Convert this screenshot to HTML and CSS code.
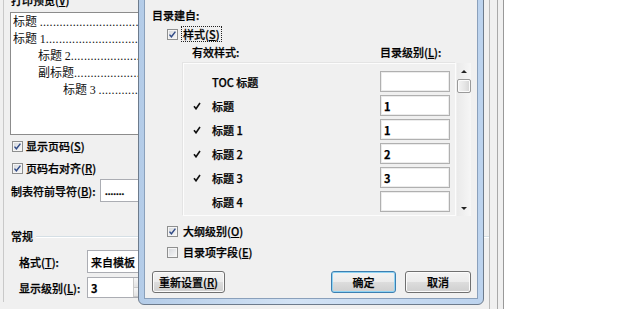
FILE: index.html
```html
<!DOCTYPE html>
<html lang="zh-CN">
<head>
  <meta charset="UTF-8" />
  <title>目录选项</title>
  <link rel="stylesheet" href="styles.css">
</head>
<body>
  <div class="screen">
    <div class="back">
      <div class="back-inner">
        <div class="caption">打印预览(<u>V</u>)</div>

        <div class="preview">
          <div class="toc-line">标题 <span class="dots">.............................................</span></div>
          <div class="toc-line">标题 <span class="num">1</span><span class="dots">.............................................</span></div>
          <div class="toc-line l2">标题 <span class="num">2</span><span class="dots">.............................................</span></div>
          <div class="toc-line l2">副标题<span class="dots">.............................................</span></div>
          <div class="toc-line l3">标题 <span class="num">3</span> <span class="dots">.............................................</span></div>
        </div>

        <div class="check check-first">
          <span class="cb"><svg width="9" height="9" viewBox="0 0 9 9"><path d="M1.5 4.6 L3.4 6.8 L7.4 1.6" fill="none" stroke="#2f4a86" stroke-width="1.4"/></svg></span>
          <span>显示页码(<u>S</u>)</span>
        </div>
        <div class="check check-next">
          <span class="cb"><svg width="9" height="9" viewBox="0 0 9 9"><path d="M1.5 4.6 L3.4 6.8 L7.4 1.6" fill="none" stroke="#2f4a86" stroke-width="1.4"/></svg></span>
          <span>页码右对齐(<u>R</u>)</span>
        </div>

        <div class="field field-leader">
          <span class="lbl lbl-wide">制表符前导符(<u>B</u>):</span>
          <div class="box box-combo"><span class="leader-dots">.......</span></div>
        </div>

        <div class="group">
          <span>常规</span>
          <span class="rule"></span>
        </div>

        <div class="field field-format">
          <span class="lbl">格式(<u>T</u>):</span>
          <div class="box box-combo">来自模板</div>
        </div>
        <div class="field field-level">
          <span class="lbl">显示级别(<u>L</u>):</span>
          <div class="box box-spin">
            <b>3</b>
            <span class="spinner"><i></i><i></i></span>
          </div>
        </div>
      </div>
    </div>
    <div class="edge"></div>
    <div class="white"></div>

    <div class="dialog">
      <div class="dialog-body">
        <div class="d-title">目录建自:</div>

        <div class="d-style">
          <span class="cb"><svg width="9" height="9" viewBox="0 0 9 9"><path d="M1.5 4.6 L3.4 6.8 L7.4 1.6" fill="none" stroke="#2f4a86" stroke-width="1.4"/></svg></span>
          <span class="focus">样式(<u>S</u>)</span>
        </div>

        <div class="d-head">
          <span class="d-head-name">有效样式:</span>
          <span>目录级别(<u>L</u>):</span>
        </div>

        <div class="d-list-wrap">
          <div class="d-list">
            <div class="d-row">
              <span class="tick"></span>
              <span class="name">TOC 标题</span>
              <span class="level"></span>
            </div>
            <div class="d-row">
              <span class="tick"><svg width="8" height="8" viewBox="0 0 8 8"><path d="M1 4.3 L3 6.8 L7 1" fill="none" stroke="#111" stroke-width="1.6"/></svg></span>
              <span class="name">标题</span>
              <span class="level">1</span>
            </div>
            <div class="d-row">
              <span class="tick"><svg width="8" height="8" viewBox="0 0 8 8"><path d="M1 4.3 L3 6.8 L7 1" fill="none" stroke="#111" stroke-width="1.6"/></svg></span>
              <span class="name">标题 1</span>
              <span class="level">1</span>
            </div>
            <div class="d-row">
              <span class="tick"><svg width="8" height="8" viewBox="0 0 8 8"><path d="M1 4.3 L3 6.8 L7 1" fill="none" stroke="#111" stroke-width="1.6"/></svg></span>
              <span class="name">标题 2</span>
              <span class="level">2</span>
            </div>
            <div class="d-row">
              <span class="tick"><svg width="8" height="8" viewBox="0 0 8 8"><path d="M1 4.3 L3 6.8 L7 1" fill="none" stroke="#111" stroke-width="1.6"/></svg></span>
              <span class="name">标题 3</span>
              <span class="level">3</span>
            </div>
            <div class="d-row">
              <span class="tick"></span>
              <span class="name">标题 4</span>
              <span class="level"></span>
            </div>
          </div>
          <div class="d-scroll">
            <span class="arrow"><i class="up"></i></span>
            <span class="thumb"></span>
            <span class="track"></span>
            <span class="arrow"><i class="down"></i></span>
          </div>
        </div>

        <div class="d-check d-check-first">
          <span class="cb"><svg width="9" height="9" viewBox="0 0 9 9"><path d="M1.5 4.6 L3.4 6.8 L7.4 1.6" fill="none" stroke="#2f4a86" stroke-width="1.4"/></svg></span>
          <span>大纲级别(<u>O</u>)</span>
        </div>
        <div class="d-check d-check-next">
          <span class="cb"></span>
          <span>目录项字段(<u>E</u>)</span>
        </div>

        <div class="d-buttons">
          <button class="btn btn-reset">重新设置(<u>R</u>)</button>
          <span class="spacer"></span>
          <button class="btn btn-ok">确定</button>
          <button class="btn btn-cancel">取消</button>
        </div>
      </div>
    </div>
  </div>
</body>
</html>
```

FILE: styles.css
```css
* {
  box-sizing: border-box;
}

html, body {
  margin: 0;
  padding: 0;
}

body {
  width: 620px;
  height: 309px;
  overflow: hidden;
  background: #fff;
  font-family: "Noto Sans CJK SC", "Noto Sans", sans-serif;
  font-size: 11px;
  font-weight: 500;
  color: #000;
  -webkit-text-stroke: 0.25px #000;
}

u {
  text-decoration: underline;
  text-underline-offset: 1px;
}

.screen {
  position: relative;
  display: flex;
  height: 309px;
}

/* window behind the dialog */
.back {
  width: 489px;
  background: #f0f0f0;
  overflow: hidden;
}

.back-inner {
  margin-left: 3px;
  height: 100%;
  border-left: 1px solid #c9c9c9;
  padding-left: 6px;
}

.edge {
  width: 15px;
  background: #f0f0f0 linear-gradient(to right, transparent 7px, #a9a9a9 7px, #a9a9a9 8px, transparent 8px);
  border-left: 1px solid #b8b8b8;
  border-right: 1px solid #999;
}

.white {
  flex: 1;
  background: #fff;
}

.caption {
  margin-top: -7px;
  padding-left: 1px;
  line-height: 14px;
}

.preview {
  margin-top: 5px;
  width: 260px;
  height: 123px;
  background: #fff;
  border: 1px solid #8c8c8c;
  padding-left: 2px;
  font-size: 12px;
  font-weight: 400;
  line-height: 16px;
  color: #111;
  -webkit-text-stroke: 0;
  overflow: hidden;
}

.toc-line {
  white-space: nowrap;
  overflow: hidden;
}

.toc-line.l2 {
  padding-left: 25px;
}

.toc-line.l3 {
  padding-left: 50px;
}

.num,
.dots {
  font-family: "Liberation Serif", serif;
}

.dots {
  letter-spacing: 0.3px;
}

.check {
  display: flex;
  align-items: center;
  gap: 3px;
  height: 16px;
  padding-left: 2px;
}

.check-first {
  margin-top: 3px;
}

.check-next {
  margin-top: 6px;
}

.cb {
  display: inline-flex;
  align-items: center;
  justify-content: center;
  width: 11px;
  height: 11px;
  flex: none;
  border: 1px solid #8e8f8f;
  background: linear-gradient(135deg, #d3d6db, #f9f9f9);
  box-shadow: inset 0 0 0 1px #f5f5f5;
}

.cb svg {
  display: block;
}

.field {
  display: flex;
  align-items: center;
}

.field-leader {
  margin-top: 3px;
  padding-left: 1px;
}

.field-format {
  margin-top: 7px;
  padding-left: 9px;
}

.field-level {
  margin-top: 4px;
  padding-left: 9px;
}

.lbl {
  width: 68px;
  flex: none;
}

.lbl-wide {
  width: 89px;
}

.box {
  display: flex;
  align-items: center;
  background: #fff;
  border: 1px solid #abadb3;
  padding-left: 3px;
}

.box-combo {
  width: 200px;
  height: 23px;
}

.leader-dots {
  font-family: "Liberation Serif", serif;
  font-weight: 700;
  line-height: 10px;
  padding-left: 1px;
}

.box-spin {
  width: 64px;
  height: 21px;
}

.box-spin b {
  flex: 1;
}

.spinner {
  display: flex;
  flex-direction: column;
  width: 17px;
  height: 19px;
  border-left: 1px solid #c9c9c9;
}

.spinner i {
  flex: 1;
  background: linear-gradient(#f6f6f6, #e3e3e3);
  border-bottom: 1px solid #c9c9c9;
}

.group {
  display: flex;
  align-items: center;
  margin-top: 27px;
  padding-left: 1px;
  line-height: 14px;
}

.group .rule {
  flex: 1;
  height: 1px;
  margin-left: 3px;
  background: #d5dfe5;
  box-shadow: 0 1px 0 #fff;
}

/* foreground dialog */
.dialog {
  position: absolute;
  left: 138px;
  top: -7px;
  width: 346px;
  height: 312px;
  padding: 5px;
  border: 1px solid #6d7b8c;
  border-radius: 0 0 6px 6px;
  background: linear-gradient(to right, #b4cce8, #d3e3f5 45%, #bcd3ee);
}

.dialog-body {
  height: 100%;
  background: #f0f0f0;
  border: 1px solid #8aa0bb;
}

.d-title {
  margin: 8px 0 0 7px;
  line-height: 14px;
}

.d-style {
  display: flex;
  align-items: center;
  gap: 3px;
  height: 16px;
  margin: 4px 0 0 22px;
}

.focus {
  border: 1px dotted #222;
  padding: 0 1px;
  line-height: 14px;
}

.d-head {
  display: flex;
  margin: 3px 0 0 47px;
  line-height: 14px;
}

.d-head-name {
  width: 188px;
}

.d-list-wrap {
  display: flex;
  gap: 1px;
  height: 153px;
  margin: 4px 0 0 38px;
}

.d-list {
  width: 273px;
  padding-top: 7px;
  border: 1px solid #fcfcfc;
  box-shadow: -1px -1px 0 #e4e4e4;
  overflow: hidden;
}

.d-row {
  display: flex;
  align-items: center;
  height: 21px;
  padding: 0 5px 0 9px;
  margin-bottom: 3px;
  flex: none;
}

.tick {
  width: 19px;
  flex: none;
}

.tick svg {
  display: block;
}

.name {
  flex: 1;
}

.level {
  display: flex;
  align-items: center;
  width: 70px;
  height: 21px;
  padding-left: 3px;
  background: #fff;
  border: 1px solid #b0b0b0;
  box-shadow: inset 0 0 0 1px #ececec;
  font-weight: 700;
}

.d-scroll {
  display: flex;
  flex-direction: column;
  align-items: center;
  width: 14px;
  background: linear-gradient(to right, #eaeaea, #f6f6f6);
}

.arrow {
  display: flex;
  align-items: center;
  justify-content: center;
  height: 16px;
  width: 100%;
}

.arrow i {
  width: 0;
  height: 0;
  border-left: 3px solid transparent;
  border-right: 3px solid transparent;
}

.arrow .up {
  border-bottom: 3px solid #222;
}

.arrow .down {
  border-top: 3px solid #222;
}

.thumb {
  width: 14px;
  height: 14px;
  border: 1px solid #9a9a9a;
  border-radius: 2px;
  background: linear-gradient(to right, #f4f4f4, #e4e4e4 60%, #d4d4d4);
  box-shadow: inset 0 0 0 1px #fbfbfb;
}

.track {
  flex: 1;
}

.d-check {
  display: flex;
  align-items: center;
  gap: 5px;
  height: 16px;
  margin-left: 22px;
}

.d-check-first {
  margin-top: 7px;
}

.d-check-next {
  margin-top: 5px;
}

.d-buttons {
  display: flex;
  gap: 9px;
  height: 22px;
  margin-top: 11px;
  padding: 0 6px 0 7px;
}

.spacer {
  flex: 1;
}

.btn {
  height: 22px;
  padding: 0;
  font: inherit;
  color: #000;
  line-height: 20px;
  text-align: center;
  border: 1px solid #707070;
  border-radius: 3px;
  background: linear-gradient(#f3f3f3 0%, #ebebeb 50%, #dddddd 50%, #cfcfcf 100%);
  box-shadow: inset 0 0 0 1px #fbfbfb;
}

.btn-reset {
  width: 73px;
}

.btn-ok {
  width: 65px;
  border-color: #3c7fb1;
  box-shadow: inset 0 0 0 1px #8fd3f3;
}

.btn-cancel {
  width: 66px;
}
```
